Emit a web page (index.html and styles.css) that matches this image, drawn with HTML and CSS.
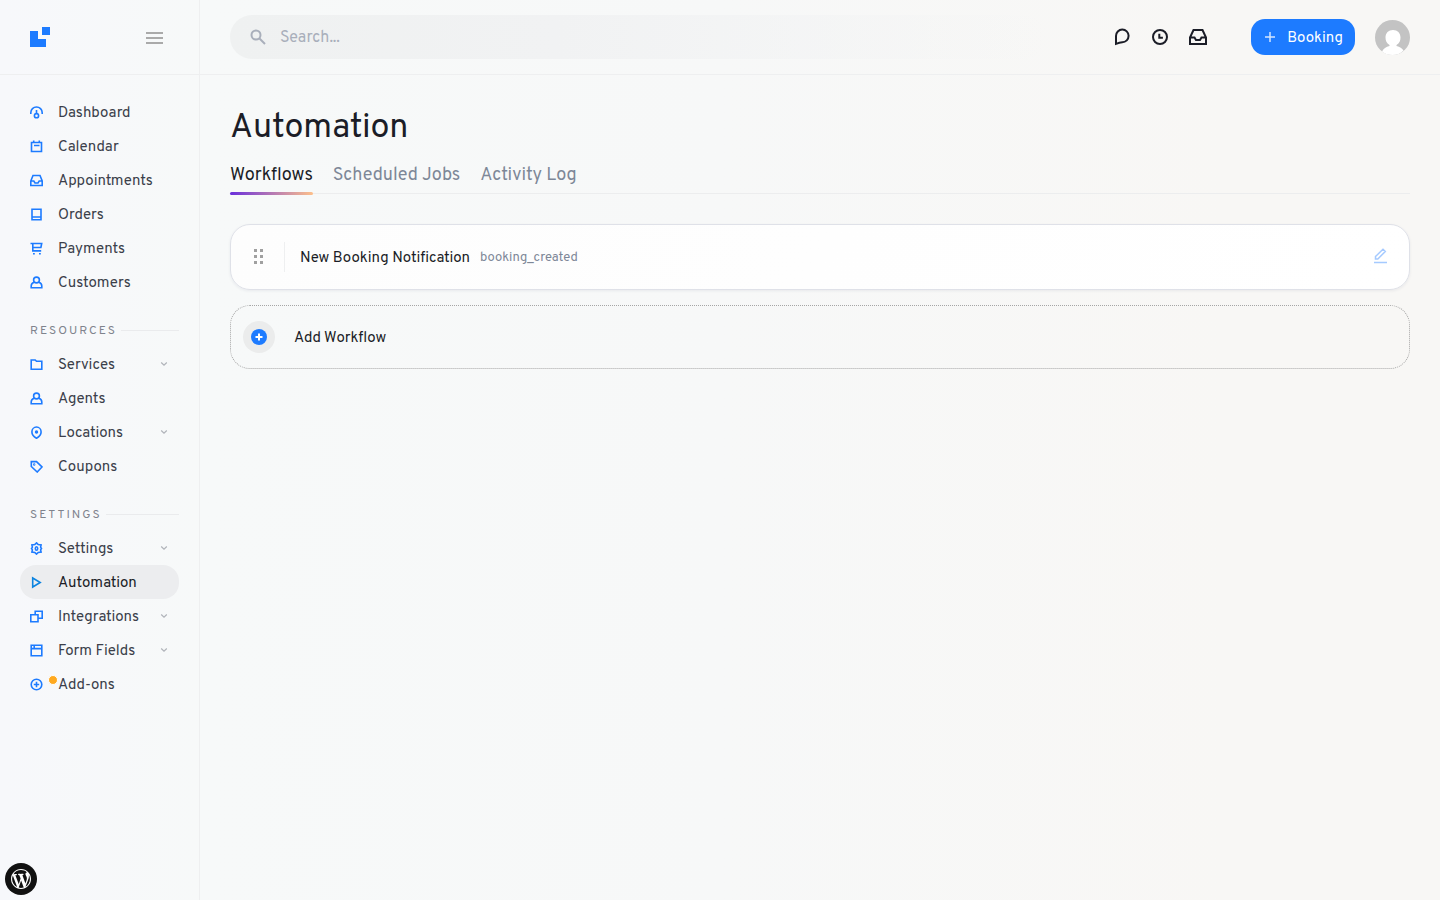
FILE: index.html
```html
<!DOCTYPE html>
<html lang="en">
<head>
  <meta charset="utf-8">
  <title>Automation</title>
  <link rel="stylesheet" href="styles.css">
</head>
<body>
  <svg class="sprite" aria-hidden="true">
    <symbol id="i-dashboard" viewBox="0 0 13 13"><path d="M.8 8V6.700a5.700 5.700 0 0 1 11.400 0V8M6.500 4v4"/><circle cx="6.500" cy="9.700" r="2.100"/></symbol>
    <symbol id="i-calendar" viewBox="0 0 13 13"><path d="M1.500 2.500h10v9h-10zM3.700.5v2M9.300.5v2M4 5.500h5.500"/></symbol>
    <symbol id="i-inbox" viewBox="0 0 13 13"><path d="M.8 7 3 1.500h7L12.200 7v4.500H.8zM.8 7h3L5 9h3l1.200-2h3"/></symbol>
    <symbol id="i-book" viewBox="0 0 13 13"><path d="M2 1.300h9v10.400H2zM2 9h9"/></symbol>
    <symbol id="i-cart" viewBox="0 0 13 13"><path d="M.5 1.500h11.200l-.8 4H3M2.800 1.500v7.400h8.400M3 11.700h1.800M9 11.700h1.800"/></symbol>
    <symbol id="i-user" viewBox="0 0 13 13"><circle cx="6.500" cy="4" r="2.900"/><path d="M4 6.200C2.200 7 1.200 8.300 1.200 10v1.700h10.600V10c0-1.700-1-3-2.800-3.800"/></symbol>
    <symbol id="i-folder" viewBox="0 0 13 13"><path d="M1.200 2h4l1.300 1.300h5.300v7.900H1.200z"/></symbol>
    <symbol id="i-pin" viewBox="0 0 13 13"><path d="M6.500 12.200C3.700 10.500 1.900 8.700 1.900 5.900a4.600 4.900 0 0 1 9.200 0c0 2.800-1.800 4.600-4.600 6.300z"/><circle cx="6.500" cy="6" r=".9"/></symbol>
    <symbol id="i-tag" viewBox="0 0 13 13"><path d="M1.300 1.600h5.200L12 7l-4.800 5-5.900-5.500z"/><circle cx="4.200" cy="4.500" r=".4"/></symbol>
    <symbol id="i-gear" viewBox="0 0 13 13"><path d="m6.500.9 1.700 1.700 2.900.3-.5 2.300.9 1.300-.9 1.300.5 2.300-2.900.3-1.700 1.700-1.700-1.700-2.900-.3.5-2.300-.9-1.300.9-1.300-.5-2.300 2.900-.3z"/><ellipse cx="6.500" cy="6.500" rx="1.200" ry="1.700"/></symbol>
    <symbol id="i-play" viewBox="0 0 13 13"><path d="m2.700 2 7.500 4.500-7.500 4.500z"/></symbol>
    <symbol id="i-layers" viewBox="0 0 13 13"><path d="M.8 4.800H8v7H.8zM5.200 4.800V1.200h7v7H8"/></symbol>
    <symbol id="i-window" viewBox="0 0 13 13"><path d="M1.200 1.300h10.600v10.400H1.200zM1.200 4.600h10.600M4.200 1.300v3.300"/></symbol>
    <symbol id="i-plus" viewBox="0 0 13 13"><circle cx="6.500" cy="6.500" r="5.300"/><path d="M6.500 3.800v5.400M3.800 6.500h5.400"/></symbol>
    <symbol id="i-down" viewBox="0 0 8 8"><path d="m1.200 2.500 2.800 2.700 2.800-2.700"/></symbol>
  </svg>

  <div class="layout">
    <aside class="sidebar">
      <div class="sidebar-top">
        <a href="#" aria-label="Home"><svg class="logo" viewBox="0 0 20 20"><path d="M0 4h8v8h8v8H0zM12 0h8v8h-8z"/></svg></a>
        <button class="menu-toggle" aria-label="Toggle menu"><svg viewBox="0 0 17 12"><path d="M0 1h17M0 6h17M0 11h17"/></svg></button>
      </div>
      <nav class="menu">
        <a class="menu-item" href="#"><svg class="icon"><use href="#i-dashboard"/></svg><span>Dashboard</span></a>
        <a class="menu-item" href="#"><svg class="icon"><use href="#i-calendar"/></svg><span>Calendar</span></a>
        <a class="menu-item" href="#"><svg class="icon"><use href="#i-inbox"/></svg><span>Appointments</span></a>
        <a class="menu-item" href="#"><svg class="icon"><use href="#i-book"/></svg><span>Orders</span></a>
        <a class="menu-item" href="#"><svg class="icon"><use href="#i-cart"/></svg><span>Payments</span></a>
        <a class="menu-item" href="#"><svg class="icon"><use href="#i-user"/></svg><span>Customers</span></a>
        <div class="menu-label">RESOURCES</div>
        <a class="menu-item" href="#"><svg class="icon"><use href="#i-folder"/></svg><span>Services</span><svg class="chevron"><use href="#i-down"/></svg></a>
        <a class="menu-item" href="#"><svg class="icon"><use href="#i-user"/></svg><span>Agents</span></a>
        <a class="menu-item" href="#"><svg class="icon"><use href="#i-pin"/></svg><span>Locations</span><svg class="chevron"><use href="#i-down"/></svg></a>
        <a class="menu-item" href="#"><svg class="icon"><use href="#i-tag"/></svg><span>Coupons</span></a>
        <div class="menu-label">SETTINGS</div>
        <a class="menu-item" href="#"><svg class="icon"><use href="#i-gear"/></svg><span>Settings</span><svg class="chevron"><use href="#i-down"/></svg></a>
        <a class="menu-item active" href="#"><svg class="icon"><use href="#i-play"/></svg><span>Automation</span></a>
        <a class="menu-item" href="#"><svg class="icon"><use href="#i-layers"/></svg><span>Integrations</span><svg class="chevron"><use href="#i-down"/></svg></a>
        <a class="menu-item" href="#"><svg class="icon"><use href="#i-window"/></svg><span>Form Fields</span><svg class="chevron"><use href="#i-down"/></svg></a>
        <a class="menu-item" href="#"><svg class="icon"><use href="#i-plus"/></svg><i class="dot"></i><span>Add-ons</span></a>
      </nav>
    </aside>

    <div class="main">
      <header class="topbar">
        <label class="search">
          <svg viewBox="0 0 16 16"><circle cx="6" cy="6" r="4.500"/><path d="m9.500 9.500 5.500 5.500"/></svg>
          <input type="text" placeholder="Search..." aria-label="Search">
        </label>
        <div class="top-icons">
          <button aria-label="Messages"><svg viewBox="0 0 18 18"><path d="M3 15.800V8a6.300 6.300 0 1 1 6.300 6.200c-2 0-3.800.5-6.300 1.600z"/></svg></button>
          <button aria-label="Pending"><svg viewBox="0 0 18 18"><circle cx="9" cy="9" r="7"/><path d="M8.300 5.800v3.900h3.600"/></svg></button>
          <button aria-label="Inbox"><svg viewBox="0 0 18 18"><path d="M1 9.500 4.500 2h9L17 9.500V16H1zM1 9.500h4.500L7 12h4l1.500-2.500H17"/></svg></button>
        </div>
        <button class="btn-booking"><svg viewBox="0 0 10 10"><path d="M5 0v10M0 5h10"/></svg><span>Booking</span></button>
        <a class="avatar" href="#" aria-label="Profile"><svg viewBox="0 0 35 35"><circle cx="17.500" cy="17.500" r="17.500" fill="#c3c3c3"/><path d="M7 31.500c1.500-3 4-4.500 7.500-5.500v-1c-3-2-4-4-4-7.500 0-4.500 3-7.500 7.500-7.500s7.500 3 7.500 7.500c0 3.500-1 5.500-4 7.500v1c3.500 1 5.500 2 7 4.500-3 3-6.500 4.500-11 4.500S10 34 7 31.500z" fill="#fff"/></svg></a>
      </header>

      <main class="content">
        <h1>Automation</h1>
        <nav class="tabs">
          <a class="tab active" href="#">Workflows</a>
          <a class="tab" href="#">Scheduled Jobs</a>
          <a class="tab" href="#">Activity Log</a>
        </nav>
        <div class="workflow">
          <span class="drag"><svg viewBox="0 0 10 16"><path d="M0 0h3v3H0zM6 0h3v3H6zM0 6h3v3H0zM6 6h3v3H6zM0 12h3v3H0zM6 12h3v3H6z"/></svg></span>
          <span class="workflow-name">New Booking Notification</span>
          <span class="workflow-code">booking_created</span>
          <button class="edit" aria-label="Edit workflow"><svg viewBox="0 0 14 16"><path d="M1.500 8.500 9 1.200l2.300 2.300-7.500 7.500H1.500zM0 14.500h13"/></svg></button>
        </div>
        <a class="add-workflow" href="#">
          <span class="add-icon"><svg viewBox="0 0 16 16"><circle cx="8" cy="8" r="8" fill="#1d7bff"/><path d="M8 4.500v7M4.500 8h7" stroke="#fff" stroke-width="2"/></svg></span>
          <span class="add-label">Add Workflow</span>
        </a>
      </main>
    </div>
  </div>

  <a class="wp-link" href="#" aria-label="WordPress"><svg viewBox="0 0 20 20"><path d="M20 10c0-5.510-4.490-10-10-10C4.480 0 0 4.490 0 10c0 5.520 4.480 10 10 10 5.510 0 10-4.480 10-10zM7.780 15.370 4.370 6.220c.55-.02 1.170-.08 1.170-.08.5-.06.44-1.130-.06-1.110 0 0-1.450.11-2.370.11-.18 0-.37 0-.58-.01C4.120 2.690 6.870 1.110 10 1.110c2.330 0 4.450.87 6.050 2.340-.68-.11-1.650.39-1.650 1.580 0 .74.450 1.360.9 2.100.35.610.55 1.360.55 2.460 0 1.490-1.400 5-1.400 5l-3.030-8.370c.54-.02.820-.17.820-.17.5-.05.440-1.250-.06-1.220 0 0-1.440.12-2.380.12-.87 0-2.330-.12-2.330-.12-.5-.03-.56 1.200-.06 1.220l.92.080 1.260 3.410zM17.410 10c.24-.64.740-1.870.430-4.250.7 1.290 1.050 2.710 1.050 4.250 0 3.290-1.730 6.240-4.400 7.780.97-2.590 1.940-5.200 2.920-7.780zM6.100 18.090C3.120 16.650 1.110 13.530 1.110 10c0-1.300.23-2.480.72-3.590C3.250 10.300 4.670 14.200 6.100 18.090zm4.030-6.630 2.580 6.980c-.86.290-1.760.45-2.710.45-.79 0-1.570-.11-2.290-.33.810-2.380 1.620-4.740 2.420-7.100z"/></svg></a>
</body>
</html>
```
FILE: styles.css
```css
* { box-sizing: border-box; }
body { margin: 0; font-family: Overpass, Roboto, sans-serif; font-size: 15px; color: #1b1d27; background: linear-gradient(to right, #f7f8fb 0%, #f7f9f9 14%, #f7f8f8 50%, #f8f7f5 85%); min-height: 100vh; }
a { color: inherit; text-decoration: none; }
button { border: 0; padding: 0; background: none; font: inherit; cursor: pointer; }
svg { display: block; fill: none; flex: none; }
.sprite { position: absolute; width: 0; height: 0; }

.layout { display: flex; min-height: 100vh; }

/* sidebar */
.sidebar { width: 200px; flex: none; border-right: 1px solid #eeeff0; }
.sidebar-top { height: 75px; padding: 0 36px 0 30px; display: flex; align-items: center; justify-content: space-between; border-bottom: 1px solid #eeeff0; }
.logo { width: 20px; height: 20px; fill: #1d7bff; }
.menu-toggle { padding-top: 2px; }
.menu-toggle svg { width: 17px; height: 12px; stroke: #aaa; stroke-width: 2; }
.menu { padding: 20px; }
.menu-item { display: flex; align-items: center; height: 34px; padding: 0 10px; border-radius: 16px; color: #3b3f4a; position: relative; }
.menu-item span, .workflow-name, .workflow-code, .add-label, .btn-booking span { padding-top: 2px; }
.menu-item.active { background: #ecedef; color: #1b1d27; }
.icon { width: 13px; height: 13px; margin-right: 15px; stroke: #1d7bff; stroke-width: 1.6; }
.active .icon { stroke: #0d84e0; }
.chevron { width: 8px; height: 8px; margin-left: auto; margin-right: 1px; stroke: #b0b3b9; stroke-width: 1.2; }
.menu-label { display: flex; align-items: center; gap: 4px; height: 48px; padding: 16px 0 0 10px; font-size: 12px; letter-spacing: 2px; color: #7f838d; }
.menu-label::after { content: ""; flex: 1; height: 1px; margin-bottom: 2px; background: #eaebed; }
.dot { position: absolute; left: 28px; top: 8px; width: 10px; height: 10px; border: 1px solid #fff; border-radius: 50%; background: #ffa91f; }

/* top bar */
.main { flex: 1; min-width: 0; }
.topbar { height: 75px; padding: 0 30px; display: flex; align-items: center; border-bottom: 1px solid #eeeff0; }
.search { flex: 1; height: 44px; margin-right: 66px; padding-left: 20px; display: flex; align-items: center; gap: 14px; border-radius: 22px; background: linear-gradient(to right, #eff1f1, #f1f2f3 40%, rgba(248, 247, 245, 0)); }
.search svg { width: 16px; height: 16px; stroke: #a9afbb; stroke-width: 2; }
.search input { flex: 1; border: 0; outline: 0; padding: 2px 0 0; background: none; font: inherit; font-size: 16px; }
.search input::placeholder { color: #a9afbb; }
.top-icons { display: flex; gap: 20px; margin-right: 44px; }
.top-icons svg { width: 18px; height: 18px; stroke: #1b1d27; stroke-width: 2; }
.btn-booking { height: 36px; padding: 0 12px 0 14px; margin-right: 20px; display: flex; align-items: center; gap: 12px; border-radius: 14px; background: #1d7bff; color: #fff; }
.btn-booking svg { width: 10px; height: 10px; stroke: #d2e5ff; stroke-width: 1.5; }
.avatar svg { width: 35px; height: 35px; }

/* content */
.content { padding: 33px 30px 30px; }
h1 { margin: 0; font-size: 34px; line-height: 42px; font-weight: 400; }
.tabs { display: flex; gap: 20px; margin-top: 12px; margin-bottom: 30px; border-bottom: 1px solid #ecedee; }
.tab { position: relative; padding-bottom: 3px; font-size: 18px; line-height: 28px; color: #7d8797; }
.tab.active { color: #1b1d27; }
.tab.active::after { content: ""; position: absolute; left: 0; right: 0; bottom: -2px; height: 3px; border-radius: 2px; background: linear-gradient(to right, #6a2fdc, #fdc08c); }
.workflow { display: flex; align-items: center; height: 66px; padding: 0 21px 0 20px; border: 1px solid #dfe1e8; border-radius: 20px; background: linear-gradient(120deg, #fdfdfd, #fff); box-shadow: 0 1px 3px rgba(30, 40, 90, .07); }
.drag { height: 30px; padding: 0 20px 0 3px; margin-right: 15px; display: flex; align-items: center; border-right: 1px solid #eeeff0; }
.drag svg { width: 10px; height: 16px; fill: #a0a0a0; }
.workflow-code { margin-left: 10px; font-size: 13px; color: #7d8797; }
.edit { margin-left: auto; padding-bottom: 2px; }
.edit svg { width: 14px; height: 16px; stroke: #a5caff; stroke-width: 1.5; }
.add-workflow { display: flex; align-items: center; gap: 19px; height: 64px; margin-top: 15px; padding: 0 12px; border: 1px dotted #a6a6a6; border-radius: 20px; }
.add-icon { width: 32px; height: 32px; display: flex; align-items: center; justify-content: center; border-radius: 50%; background: #ebecec; }
.add-icon svg { width: 16px; height: 16px; }

.wp-link { position: fixed; left: 5px; bottom: 5px; width: 32px; height: 32px; display: flex; align-items: center; justify-content: center; border-radius: 50%; background: #111; }
.wp-link svg { width: 20px; height: 20px; fill: #fff; }
```
